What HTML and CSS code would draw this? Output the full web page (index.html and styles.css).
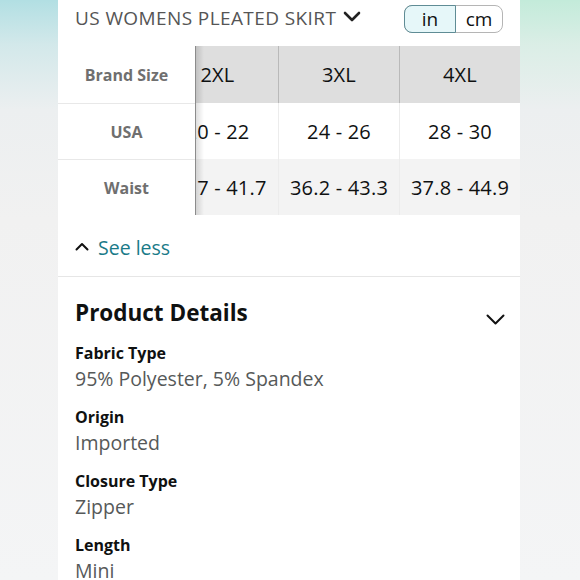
FILE: index.html
```html
<!DOCTYPE html>
<html>
<head>
<meta charset="utf-8">
<link rel="stylesheet" href="styles.css">
</head>
<body>
<div class="panel">
  <div class="size-head">
    <div class="size-title">US WOMENS PLEATED SKIRT
      <svg class="title-chev" width="18" height="12" viewBox="0 0 18 12"><path d="M2 2 L9 9 L16 2" fill="none" stroke="#222" stroke-width="2.6" stroke-linecap="round" stroke-linejoin="round"/></svg>
    </div>
    <div class="unit-toggle">
      <span class="unit unit-on">in</span>
      <span class="unit">cm</span>
    </div>
  </div>

  <div class="size-table">
    <div class="label-col">
      <div class="label-cell head-cell">Brand Size</div>
      <div class="label-cell">USA</div>
      <div class="label-cell">Waist</div>
    </div>
    <div class="data-area">
      <div class="data-track">
        <div class="data-row row-head">
          <div class="data-cell">2XL</div>
          <div class="data-cell">3XL</div>
          <div class="data-cell">4XL</div>
        </div>
        <div class="data-row row-plain">
          <div class="data-cell">20 - 22</div>
          <div class="data-cell">24 - 26</div>
          <div class="data-cell">28 - 30</div>
        </div>
        <div class="data-row row-alt">
          <div class="data-cell">34.7 - 41.7</div>
          <div class="data-cell">36.2 - 43.3</div>
          <div class="data-cell">37.8 - 44.9</div>
        </div>
      </div>
      <div class="sticky-shadow"></div>
    </div>
  </div>

  <div class="see-less">
    <svg class="caret" width="14" height="9" viewBox="0 0 14 9"><path d="M1.5 7.5 L7 2 L12.5 7.5" fill="none" stroke="#111" stroke-width="2" stroke-linecap="round" stroke-linejoin="round"/></svg>
    <span>See less</span>
  </div>

  <div class="details">
    <div class="details-head">
      <h2 class="details-title">Product Details</h2>
      <svg class="details-chev" width="19" height="12" viewBox="0 0 19 12"><path d="M1.5 1.5 L9.5 9.5 L17.5 1.5" fill="none" stroke="#111" stroke-width="2" stroke-linecap="round" stroke-linejoin="round"/></svg>
    </div>
    <div class="detail">
      <div class="detail-label">Fabric Type</div>
      <div class="detail-value">95% Polyester, 5% Spandex</div>
    </div>
    <div class="detail">
      <div class="detail-label">Origin</div>
      <div class="detail-value">Imported</div>
    </div>
    <div class="detail">
      <div class="detail-label">Closure Type</div>
      <div class="detail-value">Zipper</div>
    </div>
    <div class="detail">
      <div class="detail-label">Length</div>
      <div class="detail-value">Mini</div>
    </div>
  </div>
</div>
</body>
</html>
```

FILE: styles.css
```css
html, body {
  margin: 0;
  padding: 0;
}
body {
  width: 580px;
  height: 580px;
  overflow: hidden;
  font-family: "Open Sans", "Liberation Sans", Arial, sans-serif;
  background:
    linear-gradient(180deg, rgba(238,240,240,0) 0px, rgba(238,240,240,0.55) 45px, #eceff0 110px, #f1f1f1 220px, #f4f5f6 100%),
    linear-gradient(90deg, #b2dfe3 0%, #b2dfe3 50%, #c3ebda 50%, #c3ebda 100%);
}
.panel {
  margin-left: 58px;
  width: 462px;
  height: 580px;
  background: #fff;
}
.size-head {
  height: 46px;
  display: flex;
  justify-content: space-between;
  align-items: flex-start;
  padding: 5px 17px 0 17px;
  box-sizing: border-box;
}
.size-title {
  margin-top: 1px;
  font-size: 19px;
  letter-spacing: 0.4px;
  line-height: 24px;
  color: #555;
  display: flex;
  align-items: center;
  gap: 7px;
}
.title-chev {
  margin-top: -2px;
}
.unit-toggle {
  display: flex;
  height: 28px;
  border: 1px solid #b5b5b5;
  border-radius: 8px;
  box-sizing: border-box;
  width: 99px;
}
.unit {
  flex: 1;
  display: flex;
  align-items: center;
  justify-content: center;
  font-size: 19px;
  color: #0f1111;
  padding-bottom: 1px;
}
.unit-on {
  background: #e6f7f9;
  border: 1px solid #5f8c95;
  margin: -1px 0 -1px -1px;
  border-radius: 8px 0 0 8px;
  flex: 0 0 50px;
}
.size-table {
  display: flex;
  height: 169px;
}
.label-col {
  width: 137px;
  display: flex;
  flex-direction: column;
}
.label-cell {
  height: 56px;
  display: flex;
  align-items: center;
  justify-content: center;
  font-size: 16px;
  font-weight: bold;
  color: #6f6f6f;
  border-top: 1px solid #e8e8e8;
  box-sizing: border-box;
}
.label-cell.head-cell {
  height: 57px;
  border-top: none;
}
.data-area {
  flex: 1;
  overflow: hidden;
  position: relative;
  border-left: 1px solid #8c8c8c;
}
.data-track {
  margin-left: -39px;
  width: 363px;
  display: flex;
  flex-direction: column;
}
.data-row {
  display: flex;
  height: 56px;
}
.data-row.row-head {
  height: 57px;
  background: #dedede;
}
.row-plain {
  background: #fff;
}
.row-alt {
  background: #f3f3f3;
}
.data-cell {
  width: 121px;
  display: flex;
  align-items: center;
  justify-content: center;
  font-size: 20px;
  letter-spacing: 0.2px;
  color: #0f1111;
  white-space: nowrap;
  border-left: 1px solid #ececec;
  box-sizing: border-box;
}
.row-head .data-cell {
  border-left: 1px solid #b9b9b9;
}
.data-cell:first-child {
  border-left: none;
}
.sticky-shadow {
  position: absolute;
  left: 0;
  top: 0;
  bottom: 0;
  width: 8px;
  background: linear-gradient(90deg, rgba(0,0,0,0.13), rgba(0,0,0,0));
}
.see-less {
  display: flex;
  align-items: center;
  gap: 9px;
  padding: 21px 17px 16px 17px;
  height: 24px;
  border-bottom: 1px solid #e6e6e6;
  color: #1a7a88;
  font-size: 19.5px;
  line-height: 24px;
}
.caret {
  margin-top: -3px;
}
.details {
  padding: 21px 17px 0 17px;
}
.details-head {
  display: flex;
  justify-content: space-between;
  align-items: center;
  height: 30px;
  margin-bottom: 14px;
}
.details-title {
  margin: 0;
  font-size: 22.5px;
  line-height: 30px;
  font-weight: bold;
  color: #0f1111;
}
.details-chev {
  margin-right: -2px;
  margin-top: 13px;
}
.detail {
  margin-bottom: 14px;
}
.detail-label {
  font-size: 16px;
  line-height: 22px;
  font-weight: bold;
  color: #0f1111;
  margin-bottom: 2px;
}
.detail-value {
  font-size: 19.5px;
  line-height: 26px;
  color: #565959;
}
```
